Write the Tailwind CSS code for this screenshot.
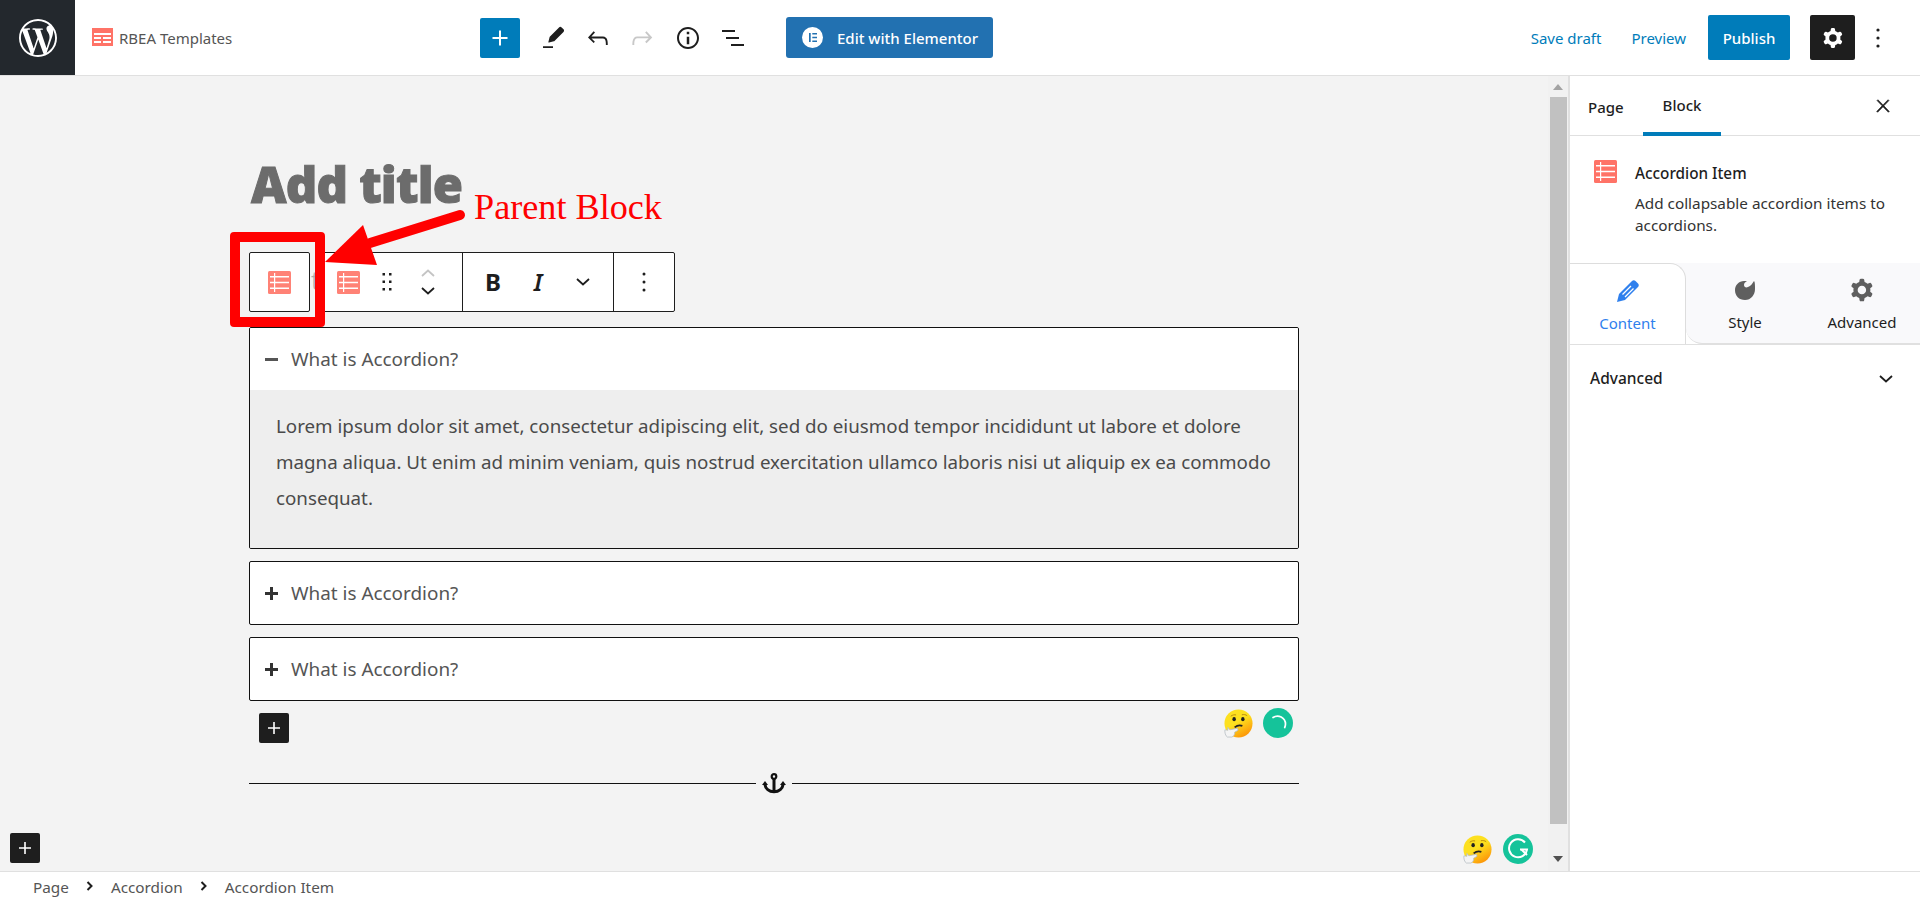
<!DOCTYPE html>
<html lang="en">
<head>
  <meta charset="UTF-8" />
  <title>RBEA Templates - Edit</title>
  <script src="https://cdn.jsdelivr.net/npm/@tailwindcss/browser@4"></script>
</head>
<body class="bg-white font-['Noto_Sans',sans-serif] text-[#1e1e1e] overflow-hidden">
<div class="relative flex flex-col h-[902px] w-[1920px]">

  <!-- top bar -->
  <header class="h-[76px] flex items-center border-b border-[#e0e0e0] bg-white shrink-0">
    <div class="w-[75px] h-[75px] bg-[#23282d] flex items-center justify-center shrink-0">
      <svg class="w-[38px] h-[38px]" viewBox="0 0 24 24" fill="#fff"><path d="M21.469 6.825c.84 1.537 1.318 3.3 1.318 5.175 0 3.979-2.156 7.456-5.363 9.325l3.295-9.527c.615-1.54.82-2.771.82-3.864 0-.405-.026-.78-.07-1.11m-7.981.105c.647-.03 1.232-.105 1.232-.105.582-.075.514-.93-.067-.899 0 0-1.755.135-2.88.135-1.064 0-2.85-.15-2.85-.15-.585-.03-.661.855-.075.885 0 0 .54.061 1.125.09l1.68 4.605-2.37 7.08L5.354 6.9c.649-.03 1.234-.1 1.234-.1.585-.075.516-.93-.065-.896 0 0-1.746.138-2.874.138-.2 0-.438-.008-.69-.015C4.911 3.15 8.235 1.215 12 1.215c2.809 0 5.365 1.072 7.286 2.833-.046-.003-.091-.009-.141-.009-1.06 0-1.812.923-1.812 1.914 0 .89.513 1.643 1.06 2.531.411.72.89 1.643.89 2.977 0 .915-.354 1.994-.821 3.479l-1.075 3.585-3.9-11.61.001.014zM12 22.784c-1.059 0-2.081-.153-3.048-.437l3.237-9.406 3.315 9.087c.024.053.05.101.078.149-1.12.393-2.325.609-3.582.609M1.211 12c0-1.564.336-3.05.935-4.39L7.29 21.709C3.694 19.96 1.212 16.271 1.211 12M12 0C5.385 0 0 5.385 0 12s5.385 12 12 12 12-5.385 12-12S18.615 0 12 0"/></svg>
    </div>
    <div class="w-[405px] pl-[17px] flex items-center gap-[6px] shrink-0">
      <svg class="w-[21px] h-[18px] -mt-[2px]" viewBox="0 0 21 18"><rect width="21" height="18" fill="#ff7367"/><path d="M2 5h17v2H2zM2 9h7v2H2zM11 9h8v2h-8zM2 13h7v2H2zM11 13h8v2h-8z" fill="#fff"/></svg>
      <span class="text-[15px] text-[#555] mt-[2px]">RBEA Templates</span>
    </div>
    <button class="w-[40px] h-[40px] bg-[#007cba] rounded-[2px] flex items-center justify-center shrink-0">
      <svg class="w-[30px] h-[30px]" viewBox="0 0 24 24" fill="#fff"><path d="M18 11.2h-5.2V6h-1.600v5.200H6v1.600h5.200V18h1.600v-5.200H18z"/></svg>
    </button>
    <svg class="w-[30px] h-[30px] ml-[18px]" viewBox="0 0 24 24" fill="#1e1e1e"><path d="M4 20h8v-1.500H4V20zM18.900 3.500c-.6-.6-1.500-.6-2.100 0l-7.200 7.200c-.1.1-.2.3-.3.500l-1 3.900c-.1.3.2.6.5.5l3.900-1c.2 0 .3-.1.5-.3l7.200-7.200c.6-.6.6-1.500 0-2.100l-1.500-1.500z"/></svg>
    <svg class="w-[30px] h-[30px] ml-[15px]" viewBox="0 0 24 24" fill="#1e1e1e"><path d="M18.300 11.700c-.6-.6-1.400-.9-2.300-.9H6.700l2.900-3.300-1.100-1-4.500 5L8.500 16l1-1-2.700-2.700H16c.5 0 .9.2 1.300.5 1 1 1 3.400 1 4.500v.3h1.500v-.2c0-1.500 0-4.300-1.500-5.700z"/></svg>
    <svg class="w-[30px] h-[30px] ml-[14px]" viewBox="0 0 24 24" fill="#c8c8c8"><path d="M15.600 6.500l-1.100 1 2.900 3.300H8c-.9 0-1.700.3-2.300.9-1.400 1.500-1.400 4.200-1.400 5.600v.2h1.500v-.3c0-1.100 0-3.500 1-4.500.3-.3.7-.5 1.300-.5h9.200L14.500 15l1.100 1.100 4.600-4.600-4.600-5z"/></svg>
    <svg class="w-[30px] h-[30px] ml-[16px]" viewBox="0 0 24 24" fill="#1e1e1e"><path d="M12 3.200c-4.800 0-8.800 3.900-8.800 8.800 0 4.800 3.900 8.800 8.800 8.800 4.800 0 8.800-3.900 8.800-8.800 0-4.800-4-8.800-8.800-8.800zm0 16c-4 0-7.200-3.300-7.200-7.200C4.800 8 8 4.800 12 4.800s7.200 3.300 7.200 7.200c0 4-3.200 7.200-7.200 7.200zM11 17h2v-6h-2v6zm0-8h2V7h-2v2z"/></svg>
    <svg class="w-[30px] h-[30px] ml-[15px]" viewBox="0 0 30 30" fill="#1e1e1e"><rect x="4" y="7" width="13" height="2"/><rect x="8" y="14" width="13" height="2"/><rect x="13" y="21" width="13" height="2"/></svg>
    <button class="ml-[38px] w-[207px] h-[41px] bg-[#2271b1] rounded-[3px] flex items-center pl-[16px] gap-[14px] shrink-0 text-white text-[15px] font-medium">
      <svg class="w-[21px] h-[21px]" viewBox="0 0 21 21"><circle cx="10.500" cy="10.500" r="10.500" fill="#fff"/><path d="M7 6h1.700v9H7zM10.300 6H15v1.600h-4.700zM10.300 9.700H15v1.600h-4.700zM10.300 13.400H15V15h-4.700z" fill="#2271b1"/></svg>
      <span class="mt-[2px]">Edit with Elementor</span>
    </button>
    <div class="flex-1"></div>
    <a class="text-[15px] text-[#007cba] mr-[30px] mt-[2px]">Save draft</a>
    <a class="text-[15px] text-[#007cba] mr-[22px] mt-[2px]">Preview</a>
    <button class="w-[82px] h-[45px] pt-[2px] bg-[#007cba] rounded-[2px] text-white text-[15px] font-medium">Publish</button>
    <button class="ml-[20px] w-[45px] h-[45px] bg-[#1e1e1e] rounded-[2px] flex items-center justify-center">
      <svg class="w-[30px] h-[30px]" viewBox="0 0 24 24" fill="#fff"><path fill-rule="evenodd" d="M10.289 4.836A1 1 0 0111.275 4h1.306a1 1 0 01.987.836l.244 1.466c.787.26 1.503.679 2.108 1.218l1.393-.522a1 1 0 011.216.437l.653 1.13a1 1 0 01-.23 1.273l-1.148.944a6.025 6.025 0 010 2.435l1.149.946a1 1 0 01.23 1.272l-.653 1.13a1 1 0 01-1.216.437l-1.394-.522c-.605.54-1.32.958-2.108 1.218l-.244 1.466a1 1 0 01-.987.836h-1.306a1 1 0 01-.986-.836l-.244-1.466a5.995 5.995 0 01-2.108-1.218l-1.394.522a1 1 0 01-1.217-.436l-.653-1.131a1 1 0 01.23-1.272l1.149-.946a6.026 6.026 0 010-2.435l-1.148-.944a1 1 0 01-.23-1.272l.653-1.131a1 1 0 011.217-.437l1.393.522a5.994 5.994 0 012.108-1.218l.244-1.466zM14.929 12a3 3 0 11-6 0 3 3 0 016 0z"/></svg>
    </button>
    <div class="w-[65px] flex justify-start pl-[21px]">
      <svg class="w-[4px] h-[20px]" viewBox="0 0 4 20" fill="#1e1e1e"><circle cx="2" cy="2" r="1.600"/><circle cx="2" cy="10" r="1.600"/><circle cx="2" cy="18" r="1.600"/></svg>
    </div>
  </header>

  <div class="flex-1 flex min-h-0">
    <!-- canvas -->
    <main class="relative w-[1548px] bg-[#f3f3f3] pl-[249px]">
      <h1 class="pt-[78px] pl-[2px] h-[176px] text-[49px] leading-[60px] font-black text-[#6c6c6c] font-['Open_Sans',sans-serif] tracking-[-0.8px] [-webkit-text-stroke:1px_#6c6c6c]">Add title</h1>

      <!-- block toolbar -->
      <div class="flex h-[60px] w-[426px]">
        <div class="w-[61px] h-[60px] border border-[#1e1e1e] rounded-[2px] bg-white flex items-center justify-center shrink-0">
          <svg class="w-[23px] h-[23px]" viewBox="0 0 23 23"><rect width="23" height="23" rx="1.500" fill="#ff8276"/><path d="M2 5h19v1.600H2zM2 10.700h19v1.600H2zM2 16.400h19V18H2zM6 2h1.200v19H6z" fill="#fff"/></svg>
        </div>
        <div class="w-[10px] shrink-0 text-[#aaa] text-[26px] leading-[56px] font-light pl-[1px] overflow-hidden">t</div>
        <div class="flex-1 flex border border-[#1e1e1e] rounded-[2px] bg-white">
          <div class="flex items-center border-r border-[#1e1e1e] w-[142px]">
            <div class="w-[55px] flex justify-center">
              <svg class="w-[23px] h-[23px]" viewBox="0 0 23 23"><rect width="23" height="23" rx="1.500" fill="#ff8276"/><path d="M2 5h19v1.600H2zM2 10.700h19v1.600H2zM2 16.400h19V18H2zM6 2h1.200v19H6z" fill="#fff"/></svg>
            </div>
            <div class="w-[21px] flex justify-center">
              <svg class="w-[10px] h-[18px]" viewBox="0 0 10 18" fill="#1e1e1e"><rect x=".5" width="2.500" height="2.500"/><rect x="7" width="2.500" height="2.500"/><rect x=".5" y="7.500" width="2.500" height="2.500"/><rect x="7" y="7.500" width="2.500" height="2.500"/><rect x=".5" y="15" width="2.500" height="2.500"/><rect x="7" y="15" width="2.500" height="2.500"/></svg>
            </div>
            <div class="w-[62px] flex flex-col items-center gap-[10px]">
              <svg class="w-[14px] h-[8px]" viewBox="0 0 14 8" fill="none" stroke="#c4c4c4" stroke-width="1.800"><path d="M1 7l6-5.500L13 7"/></svg>
              <svg class="w-[14px] h-[8px]" viewBox="0 0 14 8" fill="none" stroke="#1e1e1e" stroke-width="1.800"><path d="M1 1l6 5.500L13 1"/></svg>
            </div>
          </div>
          <div class="flex items-center border-r border-[#1e1e1e] w-[151px]">
            <span class="w-[60px] text-center text-[24px] font-bold leading-none">B</span>
            <span class="w-[30px] text-center text-[24px] font-semibold italic leading-none">I</span>
            <div class="w-[60px] flex justify-center">
              <svg class="w-[14px] h-[8px]" viewBox="0 0 14 8" fill="none" stroke="#1e1e1e" stroke-width="1.800"><path d="M1 1l6 5.500L13 1"/></svg>
            </div>
          </div>
          <div class="flex-1 flex items-center justify-center">
            <svg class="w-[4px] h-[20px]" viewBox="0 0 4 20" fill="#1e1e1e"><circle cx="2" cy="2" r="1.500"/><circle cx="2" cy="10" r="1.500"/><circle cx="2" cy="18" r="1.500"/></svg>
          </div>
        </div>
      </div>

      <!-- accordion -->
      <div class="w-[1050px] mt-[15px] flex flex-col text-[#555] text-[18.900px]">
        <div class="border border-[#111] rounded-[2px] overflow-hidden h-[222px]">
          <div class="h-[62px] bg-white flex items-center pl-[15px] gap-[13px]">
            <span class="w-[13px] h-[3px] bg-[#555]"></span>
            <span class="mt-[1px]">What is Accordion?</span>
          </div>
          <div class="h-[158px] bg-[#eeeeee] px-[26px] pt-[18px] leading-[36px] text-[18.750px] text-[#4a4a4a] whitespace-nowrap">Lorem ipsum dolor sit amet, consectetur adipiscing elit, sed do eiusmod tempor incididunt ut labore et dolore<br>magna aliqua. Ut enim ad minim veniam, quis nostrud exercitation ullamco laboris nisi ut aliquip ex ea commodo<br>consequat.</div>
        </div>
        <div class="mt-[12px] h-[64px] border border-[#111] rounded-[2px] bg-white flex items-center pl-[15px] gap-[13px]">
          <svg class="w-[13px] h-[13px]" viewBox="0 0 13 13" fill="#333"><path d="M5 0h3v5h5v3H8v5H5V8H0V5h5z"/></svg>
          <span class="mt-[1px]">What is Accordion?</span>
        </div>
        <div class="mt-[12px] h-[64px] border border-[#111] rounded-[2px] bg-white flex items-center pl-[15px] gap-[13px]">
          <svg class="w-[13px] h-[13px]" viewBox="0 0 13 13" fill="#333"><path d="M5 0h3v5h5v3H8v5H5V8H0V5h5z"/></svg>
          <span class="mt-[1px]">What is Accordion?</span>
        </div>
        <button class="mt-[12px] ml-[10px] w-[30px] h-[30px] rounded-[2px] bg-[#1e1e1e] flex items-center justify-center">
          <svg class="w-[24px] h-[24px]" viewBox="0 0 24 24" fill="#fff"><path d="M18 11.200h-5.200V6h-1.600v5.200H6v1.600h5.200V18h1.600v-5.200H18z"/></svg>
        </button>
        <div class="mt-[30px] h-[20px] flex items-center">
          <div class="flex-1 h-px bg-[#111]"></div>
          <svg class="w-[24px] h-[21px] mx-[6px]" viewBox="0 0 24 21" fill="none" stroke="#111"><circle cx="12" cy="3.500" r="2.300" stroke-width="2.200"/><path d="M12 6v13" stroke-width="3"/><path d="M2.800 11c.6 4.500 4.200 7.700 9.200 7.700s8.600-3.200 9.200-7.700" stroke-width="3"/><path d="M0 12l3-4 3 4zM24 12l-3-4-3 4z" fill="#111" stroke="none"/></svg>
          <div class="flex-1 h-px bg-[#111]"></div>
        </div>
      </div>

      <!-- floating items -->
      <button class="absolute left-[10px] top-[757px] w-[30px] h-[30px] rounded-[2px] bg-[#1e1e1e] flex items-center justify-center">
        <svg class="w-[24px] h-[24px]" viewBox="0 0 24 24" fill="#fff"><path d="M18 11.200h-5.200V6h-1.600v5.200H6v1.600h5.200V18h1.600v-5.200H18z"/></svg>
      </button>

      <svg class="absolute left-[1224px] top-[633px] w-[29px] h-[29px]" viewBox="0 0 30 30">
        <defs><linearGradient id="em1" x1="0.200" y1="0" x2="0.800" y2="1"><stop offset="0.450" stop-color="#fde01f"/><stop offset="1" stop-color="#fc8b05"/></linearGradient></defs>
        <circle cx="15" cy="15" r="14.500" fill="url(#em1)"/>
        <path d="M7 7.500c2-1.500 4-1.800 5.500-1.300M18.500 6c2-.6 4-.2 5.500 1" fill="none" stroke="#b98a10" stroke-width="1"/>
        <ellipse cx="10.500" cy="10.500" rx="1.800" ry="2.200" fill="#222"/><ellipse cx="19.500" cy="10.500" rx="1.800" ry="2.200" fill="#222"/>
        <path d="M11 19c2.500-2 5-2.600 8-1.500" fill="none" stroke="#222" stroke-width="1.800"/>
        <path d="M1 21.500l3 .5 0-3 2 2.500 8-1.500.5 2-3.500 2c.5 2-1 4.500-3 5H3.500C1.500 28 .5 24 1 21.500z" fill="#f4f4f4" stroke="#b5bdc2" stroke-width="0.800"/>
      </svg>
      <svg class="absolute left-[1263px] top-[632px] w-[30px] h-[30px]" viewBox="0 0 30 30"><circle cx="15" cy="15" r="15" fill="#15c39a"/><path d="M10 9.500a8 8 0 0 1 12.500 6.500c0 1.300-.3 2.500-.8 3.500" fill="none" stroke="#fff" stroke-width="1.700" stroke-linecap="round"/></svg>

      <svg class="absolute left-[1463px] top-[759px] w-[29px] h-[29px]" viewBox="0 0 30 30">
        <defs><linearGradient id="em2" x1="0.200" y1="0" x2="0.800" y2="1"><stop offset="0.450" stop-color="#fde01f"/><stop offset="1" stop-color="#fc8b05"/></linearGradient></defs>
        <circle cx="15" cy="15" r="14.500" fill="url(#em2)"/>
        <path d="M7 7.500c2-1.500 4-1.800 5.500-1.300M18.500 6c2-.6 4-.2 5.500 1" fill="none" stroke="#b98a10" stroke-width="1"/>
        <ellipse cx="10.500" cy="10.500" rx="1.800" ry="2.200" fill="#222"/><ellipse cx="19.500" cy="10.500" rx="1.800" ry="2.200" fill="#222"/>
        <path d="M11 19c2.500-2 5-2.600 8-1.500" fill="none" stroke="#222" stroke-width="1.800"/>
        <path d="M1 21.500l3 .5 0-3 2 2.500 8-1.500.5 2-3.500 2c.5 2-1 4.500-3 5H3.500C1.500 28 .5 24 1 21.500z" fill="#f4f4f4" stroke="#b5bdc2" stroke-width="0.800"/>
      </svg>
      <svg class="absolute left-[1503px] top-[758px] w-[30px] h-[30px]" viewBox="0 0 30 30"><circle cx="15" cy="15" r="15" fill="#15c39a"/><path d="M22 8.500A9 9 0 1 0 24 15.500h-7" fill="none" stroke="#fff" stroke-width="2"/><path d="M18.500 15.500l5.500 5.500" stroke="#fff" stroke-width="2"/></svg>
    </main>

    <!-- scrollbar -->
    <div class="w-[20px] bg-[#f1f1f1] flex flex-col items-center shrink-0">
      <svg class="w-[10px] h-[6px] mt-[8px] mb-[7px]" viewBox="0 0 10 6" fill="#a3a3a3"><path d="M5 0l5 6H0z"/></svg>
      <div class="w-[17px] flex-1 bg-[#c1c1c1]"></div>
      <svg class="w-[10px] h-[6px] mt-[32px] mb-[9px]" viewBox="0 0 10 6" fill="#505050"><path d="M5 6L0 0h10z"/></svg>
    </div>

    <!-- sidebar -->
    <aside class="flex-1 bg-white border-l-2 border-[#e0e0e0] text-[15px]">
      <div class="h-[60px] flex border-b border-[#e0e0e0] relative">
        <div class="w-[73px] pl-[18px] pt-[3px] flex items-center font-medium">Page</div>
        <div class="w-[78px] flex items-center justify-center pt-[3px] font-medium border-b-4 border-[#007cba] h-[60px]">Block</div>
        <svg class="absolute left-[303px] top-[20px] w-[20px] h-[20px]" viewBox="0 0 24 24" fill="#1e1e1e"><path d="M13 11.800l6.100-6.300-1-1-6.100 6.200-6.100-6.200-1 1 6.100 6.300-6.500 6.700 1 1 6.500-6.600 6.500 6.600 1-1z" stroke="#1e1e1e" stroke-width="0.800"/></svg>
      </div>
      <div class="h-[127px] flex pl-[24px] pt-[24px]">
        <svg class="w-[23px] h-[23px] shrink-0" viewBox="0 0 23 23"><rect width="23" height="23" rx="1.500" fill="#ff7367"/><path d="M2 5h19v1.600H2zM2 10.700h19v1.600H2zM2 16.400h19V18H2zM6 2h1.200v19H6z" fill="#fff"/></svg>
        <div class="ml-[18px]">
          <div class="font-medium text-[15.300px] leading-[24px] mt-[1px]">Accordion Item</div>
          <div class="text-[15.300px] leading-[22px] mt-[7px] text-[#333] w-[275px]">Add collapsable accordion items to accordions.</div>
        </div>
      </div>
      <div class="h-[81px] flex bg-[#f9f9fb]">
        <div class="w-[116px] h-[81px] bg-white border-t border-r border-[#ddd] rounded-tr-[16px] flex flex-col items-center pt-[15px] text-[#2f80ed]">
          <svg class="w-[24px] h-[24px]" viewBox="0 0 24 24"><path d="M1 23l2-8L16 2c1-1 2.500-1 3.500 0l2.500 2.500c1 1 1 2.500 0 3.500L9 21z" fill="#2f80ed"/><path d="M6.500 15.500L15 7M9 18l8.500-8.500" stroke="#fff" stroke-width="1.300"/></svg>
          <span class="mt-[9px]">Content</span>
        </div>
        <div class="flex-1 bg-white">
          <div class="h-[81px] bg-[#f9f9fb] border-b border-[#e0e0e0] rounded-bl-[16px] flex pt-[15px]">
            <div class="w-[118px] flex flex-col items-center">
              <svg class="w-[24px] h-[24px]" viewBox="0 0 24 24" fill="#5f5f5f"><path d="M11 3C6 3 2 7 2 12c0 6 4 10 10 10s10-5 10-11c0-4 0-7-1-8-2 3-3 5-6 6-2 1-4 0-4-2s1-3 3-3.500C13 3 12 3 11 3z"/></svg>
              <span class="mt-[9px]">Style</span>
            </div>
            <div class="flex-1 flex flex-col items-center">
              <svg class="w-[34px] h-[34px] -mt-[5px] -mb-[5px]" viewBox="0 0 24 24" fill="#5f5f5f"><path fill-rule="evenodd" d="M10.289 4.836A1 1 0 0111.275 4h1.306a1 1 0 01.987.836l.244 1.466c.787.26 1.503.679 2.108 1.218l1.393-.522a1 1 0 011.216.437l.653 1.13a1 1 0 01-.23 1.273l-1.148.944a6.025 6.025 0 010 2.435l1.149.946a1 1 0 01.23 1.272l-.653 1.13a1 1 0 01-1.216.437l-1.394-.522c-.605.54-1.32.958-2.108 1.218l-.244 1.466a1 1 0 01-.987.836h-1.306a1 1 0 01-.986-.836l-.244-1.466a5.995 5.995 0 01-2.108-1.218l-1.394.522a1 1 0 01-1.217-.436l-.653-1.131a1 1 0 01.23-1.272l1.149-.946a6.026 6.026 0 010-2.435l-1.148-.944a1 1 0 01-.23-1.272l.653-1.131a1 1 0 011.217-.437l1.393.522a5.994 5.994 0 012.108-1.218l.244-1.466zM14.929 12a3 3 0 11-6 0 3 3 0 016 0z"/></svg>
              <span class="mt-[9px]">Advanced</span>
            </div>
          </div>
        </div>
      </div>
      <div class="h-[68px] flex items-center justify-between pl-[20px] pr-[27px] border-t border-[#e0e0e0] font-medium text-[15.500px]">
        <span>Advanced</span>
        <svg class="w-[14px] h-[8px]" viewBox="0 0 14 8" fill="none" stroke="#1e1e1e" stroke-width="1.800"><path d="M1 1l6 5.500L13 1"/></svg>
      </div>
    </aside>
  </div>

  <!-- breadcrumbs -->
  <footer class="h-[31px] border-t border-[#e0e0e0] bg-white flex items-center pl-[33px] text-[15.300px] text-[#555] shrink-0">
    <span class="mt-[1px]">Page</span>
    <svg class="w-[8px] h-[10px] mx-[17px] -mt-[2px]" viewBox="0 0 8 10" fill="none" stroke="#1e1e1e" stroke-width="2"><path d="M1.500 1l4 4-4 4"/></svg>
    <span class="mt-[1px]">Accordion</span>
    <svg class="w-[8px] h-[10px] mx-[17px] -mt-[2px]" viewBox="0 0 8 10" fill="none" stroke="#1e1e1e" stroke-width="2"><path d="M1.500 1l4 4-4 4"/></svg>
    <span class="mt-[1px]">Accordion Item</span>
  </footer>

  <!-- red annotation drawn on the screenshot -->
  <div class="absolute left-[230px] top-[232px] w-[95px] h-[95px] border-[10px] border-[#ff0000] rounded-[4px]"></div>
  <svg class="absolute left-[320px] top-[205px] w-[150px] h-[65px]" viewBox="0 0 150 65" fill="#ff0000">
    <path d="M5 57L43 20l14 40z"/>
    <path d="M50 38L140 10" stroke="#ff0000" stroke-width="10" stroke-linecap="round"/>
  </svg>
  <span class="absolute left-[474px] top-[185px] text-[36.200px] leading-[44px] text-[#ff0000] font-['Liberation_Serif',serif]">Parent Block</span>
</div>
</body>
</html>
